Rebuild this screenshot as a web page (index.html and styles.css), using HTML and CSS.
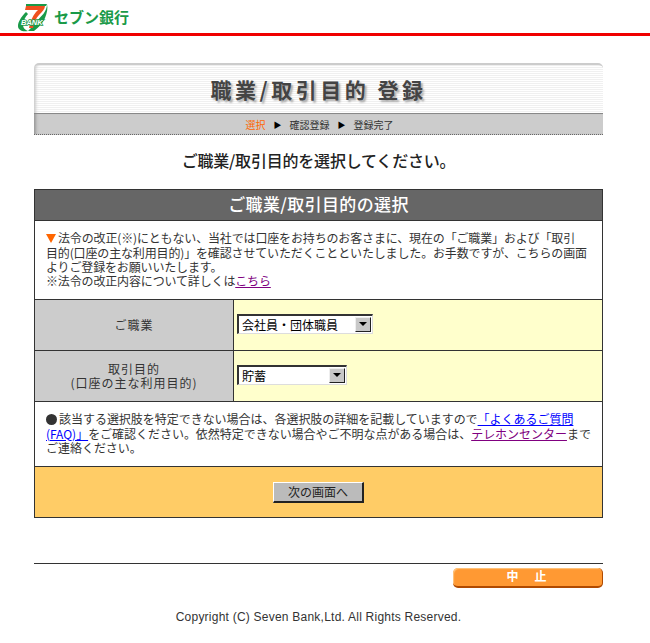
FILE: index.html
```html
<!DOCTYPE html>
<html lang="ja">
<head>
<meta charset="utf-8">
<title>職業/取引目的 登録</title>
<link rel="stylesheet" href="styles.css">
</head>
<body>
<header class="site-header">
  <svg class="logo-mark" viewBox="0 0 30 28" width="30" height="28" aria-hidden="true">
    <path d="M8 8 C3 13 0 18 0 22 C0 26 4 28 10 27 C7 26 5 24 5 21 C5 17 7 13 10 10 Z" fill="#1a9a48"/>
    <path d="M29 0 C29 8 23 12 19 17 C16 21 13 24 10 27 L16 27 C21 23 25 19 27 14 C29 9 30 4 29 0 Z" fill="#1a9a48"/>
    <path d="M8 2 H27 C27 5 24 8 21 11 C18 14 16 19 15 24 L11 24 C12 18 14 13 18 8 L20 6 H7 Z" fill="#f0501e"/>
    <path d="M8 0 H29 L28 2 H8 Z" fill="#1a9a48"/>
    <text x="3" y="20.5" class="logo-bank">BANK</text>
  </svg>
  <span class="logo-text">セブン銀行</span>
</header>

<main class="page">
  <div class="banner">
    <h1 class="banner-title">職業/取引目的 登録</h1>
    <ol class="steps">
      <li class="step-current">選択</li>
      <li class="step-arrow">▶</li>
      <li>確認登録</li>
      <li class="step-arrow">▶</li>
      <li>登録完了</li>
    </ol>
  </div>

  <h2 class="lead">ご職業/取引目的を選択してください。</h2>

  <table class="form-table">
    <colgroup><col class="col-label"><col></colgroup>
    <tr><th colspan="2" class="table-head">ご職業/取引目的の選択</th></tr>
    <tr>
      <td colspan="2" class="notice">
        <span class="tri"></span>法令の改正(※)にともない、当社では口座をお持ちのお客さまに、現在の「ご職業」および「取引<br>目的(口座の主な利用目的)」を確認させていただくことといたしました。お手数ですが、こちらの画面<br>よりご登録をお願いいたします。<br>※法令の改正内容について詳しくは<a class="visited" href="#">こちら</a>
      </td>
    </tr>
    <tr class="row-field">
      <td class="label">ご職業</td>
      <td class="value">
        <span class="select-box select-wide">
          <select class="select"><option>会社員・団体職員</option></select>
          <span class="select-arrow"></span>
        </span>
      </td>
    </tr>
    <tr class="row-field">
      <td class="label">取引目的<br>(口座の主な利用目的)</td>
      <td class="value">
        <span class="select-box select-narrow">
          <select class="select"><option>貯蓄</option></select>
          <span class="select-arrow"></span>
        </span>
      </td>
    </tr>
    <tr>
      <td colspan="2" class="notice note-second">
        <span class="dot"></span>該当する選択肢を特定できない場合は、各選択肢の詳細を記載していますので<a class="link" href="#">「よくあるご質問<br>(FAQ)」</a>をご確認ください。依然特定できない場合やご不明な点がある場合は、<a class="visited" href="#">テレホンセンター</a>まで<br>ご連絡ください。
      </td>
    </tr>
    <tr>
      <td colspan="2" class="actions"><button class="next-btn" type="button">次の画面へ</button></td>
    </tr>
  </table>

  <div class="stop-row">
    <button class="stop-btn" type="button">中　止</button>
  </div>
  <footer class="copyright">Copyright (C) Seven Bank,Ltd. All Rights Reserved.</footer>
</main>
</body>
</html>
```
FILE: styles.css
```css
* { box-sizing: border-box; }
html, body { margin: 0; padding: 0; background: #fff; }
body {
  font-family: "Noto Sans CJK JP", "Liberation Sans", sans-serif;
  font-size: 12px;
  color: #333;
}
.site-header {
  height: 36px;
  border-bottom: 3px solid #f00000;
  display: flex;
  align-items: flex-start;
  padding: 4px 0 0 18px;
  gap: 6px;
}
.logo-mark { display: block; flex: none; }
.logo-bank {
  font: italic bold 7.5px "Liberation Sans", sans-serif;
  fill: #fff;
  stroke: #1a9a48;
  stroke-width: 1.6px;
  paint-order: stroke;
}
.logo-text {
  font-size: 15px;
  font-weight: 700;
  line-height: 20px;
  margin-top: 3px;
  color: #1a9a48;
}
.page { width: 569px; margin: 27px 0 0 34px; }
.banner {
  height: 72px;
  border-top: 2px solid #ccc;
  border-radius: 5px 5px 0 0;
  overflow: hidden;
  background: repeating-linear-gradient(#f0f0f0 0, #f0f0f0 1px, #fff 1px, #fff 2px);
  display: flex;
  flex-direction: column;
  box-shadow: inset 4px 0 3px -2px #ccc;
}
.banner-title {
  margin: 0;
  height: 48px;
  flex: none;
  text-align: center;
  font-size: 21px;
  line-height: 48px;
  letter-spacing: 3.5px;
  font-weight: 700;
  color: #444;
  text-shadow: 2px 2px 2px #aaa;
}
.steps {
  list-style: none;
  margin: 0;
  padding: 0 0 0 2px;
  flex: 1;
  display: flex;
  justify-content: center;
  align-items: center;
  gap: 8px;
  background: #ccc;
  border-top: 1px solid #888;
  border-bottom: 1px dotted #666;
  box-shadow: inset 4px 0 3px -2px #999;
  font-size: 10px;
  color: #333;
}
.step-current { color: #ff6600; }
.step-arrow { color: #000; font-size: 8px; }
.lead {
  margin: 0;
  height: 54px;
  line-height: 50px;
  text-align: center;
  font-size: 16px;
  font-weight: 500;
  letter-spacing: -0.2px;
  color: #222;
}
.form-table {
  width: 569px;
  border-collapse: collapse;
  table-layout: fixed;
}
.col-label { width: 199px; }
.form-table th, .form-table td {
  border: 1px solid #333;
  padding: 0;
}
.form-table .table-head {
  height: 31px;
  padding-bottom: 3px;
  background: #666;
  color: #fff;
  font-size: 17px;
  font-weight: 500;
  letter-spacing: 0.35px;
  text-align: center;
}
.notice {
  height: 79px;
  padding: 0 4px 0 11px !important;
  font-size: 12px;
  line-height: 14.4px;
  letter-spacing: -0.15px;
  color: #333;
  background: #fff;
}
.notice.note-second { height: 65px; letter-spacing: -0.03px; }
.tri {
  display: inline-block;
  width: 0; height: 0;
  border-left: 5.5px solid transparent;
  border-right: 5.5px solid transparent;
  border-top: 9px solid #ff6600;
  margin-right: 2px;
}
.dot {
  display: inline-block;
  width: 11px; height: 11px;
  border-radius: 50%;
  background: #333;
  margin-right: 2px;
  vertical-align: -1px;
}
.visited { color: #800080; text-decoration: underline; }
.link { color: #0000ff; text-decoration: underline; }
.row-field { height: 51px; }
.label {
  background: #ccc;
  text-align: center;
  line-height: 14.4px;
  letter-spacing: 1px;
}
.value { background: #ffffcc; padding: 0 0 2px 3px !important; }
.select-box {
  display: flex;
  height: 20px;
  background: #fff;
  border-style: solid;
  border-width: 2px 1px 1px 2px;
  border-color: #333 #ddd #ddd #333;
  padding: 0 1px 0 0;
}
.select-wide { width: 136px; }
.select-narrow { width: 110px; }
.select {
  appearance: none;
  flex: 1;
  min-width: 0;
  border: 0;
  background: #fff;
  padding: 0 0 0 3px;
  font: 12px "Noto Sans CJK JP", sans-serif;
  color: #000;
  height: 17px;
  line-height: 17px;
}
.select-arrow {
  flex: none;
  width: 16px;
  height: 15px;
  margin-top: 1px;
  background: #c8c8c8;
  border-style: solid;
  border-width: 1px;
  border-color: #eee #222 #222 #eee;
  position: relative;
}
.select-arrow::after {
  content: "";
  position: absolute;
  left: 3px;
  top: 4px;
  border-left: 4px solid transparent;
  border-right: 4px solid transparent;
  border-top: 4px solid #000;
}
.actions { height: 51px; background: #ffcc66; text-align: center; }
.next-btn {
  width: 91px;
  height: 21px;
  padding: 0;
  background: #bbb;
  border-style: solid;
  border-width: 1px 2px 2px 1px;
  border-color: #fff #222 #222 #fff;
  font: 12px "Noto Sans CJK JP", sans-serif;
  color: #222;
}
.stop-row {
  margin-top: 45px;
  border-top: 1px solid #333;
  padding-top: 4px;
  display: flex;
  justify-content: flex-end;
}
.stop-btn {
  width: 150px;
  height: 20px;
  padding: 0 0 2px;
  border: 0;
  border-bottom: 2px solid #b04a00;
  border-right: 1px solid #b04a00;
  border-radius: 5px;
  background: #ff9933;
  box-shadow: inset 1px 1px 1px #ffc680;
  color: #fff;
  font: 700 12px/1 "Noto Sans CJK JP", sans-serif;
  letter-spacing: 2px;
}
.copyright {
  margin-top: 22px;
  text-align: center;
  font-family: "Liberation Sans", sans-serif;
  font-size: 12px;
  line-height: 14px;
  letter-spacing: 0.23px;
  color: #333;
}
```
